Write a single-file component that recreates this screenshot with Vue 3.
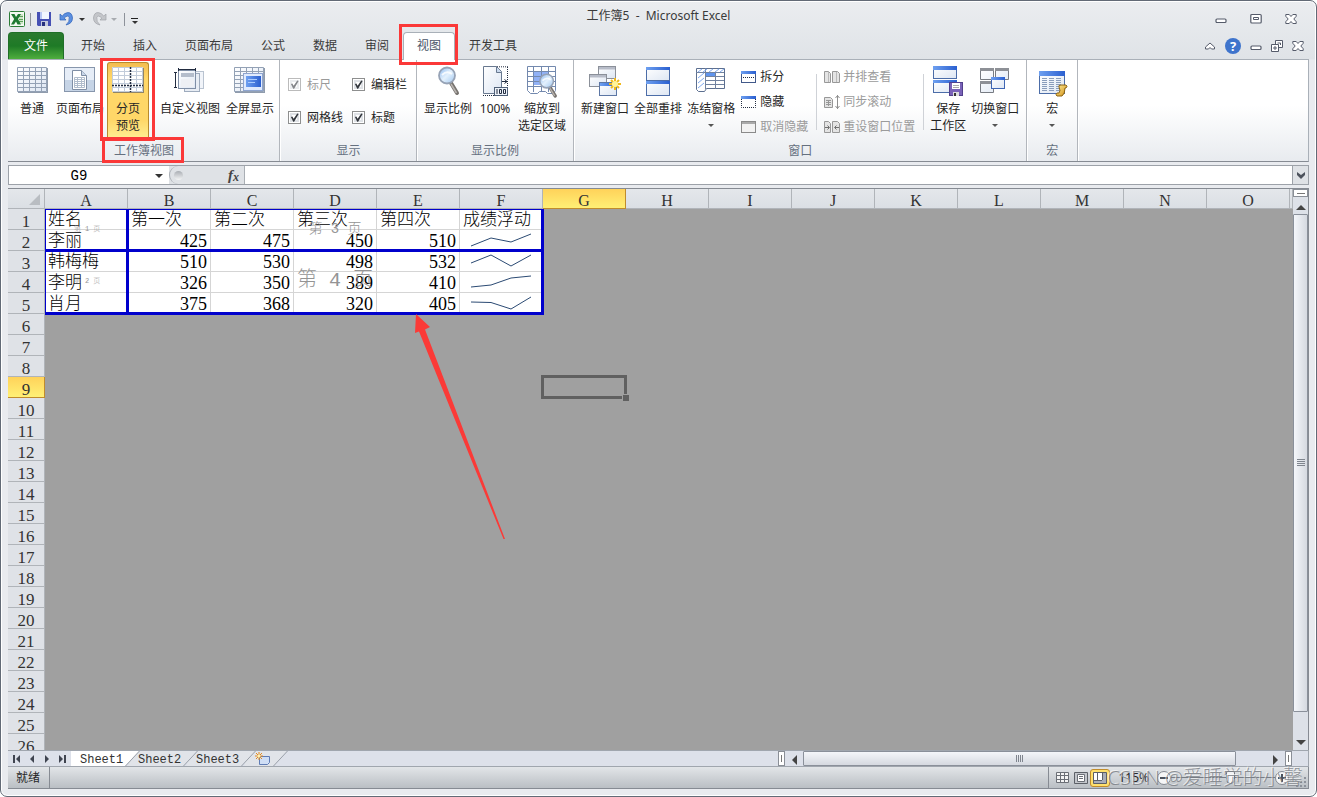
<script setup>
import { ref } from 'vue'

const tabs = ['开始', '插入', '页面布局', '公式', '数据', '审阅', '视图', '开发工具']
const activeTab = ref('视图')

const columns = 'ABCDEFGHIJKLMNO'.split('')
const rowCount = 26
const selected = { col: 'G', row: 9 }

const data = [
  ['姓名', '第一次', '第二次', '第三次', '第四次', '成绩浮动'],
  ['李丽', 425, 475, 450, 510],
  ['韩梅梅', 510, 530, 498, 532],
  ['李明', 326, 350, 389, 410],
  ['肖月', 375, 368, 320, 405]
]
const sparks = {
  2: '11,16 31,8 51,12 71,4',
  3: '11,12 31,4 51,15 71,4',
  4: '11,15 31,13 51,6 71,4',
  5: '11,9 31,9.5 51,16 71,4'
}
const isText = (v) => typeof v === 'string'
const nameBox = ref('G9')
const formula = ref('')
const zoomLevel = ref(58)
const sheets = ['Sheet1', 'Sheet2', 'Sheet3']
const activeSheet = ref('Sheet1')

const viewButtons = [
  { icon: 'normal', lines: ['普通'] },
  { icon: 'layout', lines: ['页面布局'] },
  { icon: 'breaks', lines: ['分页', '预览'], on: true },
  { icon: 'custom', lines: ['自定义视图'] },
  { icon: 'full', lines: ['全屏显示'] }
]
const checks = ref([
  { id: 'ruler', label: '标尺', on: true, off: true },
  { id: 'fbar', label: '编辑栏', on: true },
  { id: 'lines', label: '网格线', on: true },
  { id: 'heads', label: '标题', on: true }
])
const zoomButtons = [
  { icon: 'lens', lines: ['显示比例'] },
  { icon: 'hundred', lines: ['100%'] },
  { icon: 'zoomsel', lines: ['缩放到', '选定区域'] }
]
const windowButtons = [
  { icon: 'newwin', lines: ['新建窗口'] },
  { icon: 'arrange', lines: ['全部重排'] },
  { icon: 'freeze', lines: ['冻结窗格'], more: true }
]
const smallA = [
  { icon: 'split', label: '拆分' },
  { icon: 'hide', label: '隐藏' },
  { icon: 'unhide', label: '取消隐藏', off: true }
]
const smallB = [
  { icon: 'side', label: '并排查看', off: true },
  { icon: 'sync', label: '同步滚动', off: true },
  { icon: 'reset', label: '重设窗口位置', off: true }
]
const spaceButtons = [
  { icon: 'savews', lines: ['保存', '工作区'] },
  { icon: 'switch', lines: ['切换窗口'], more: true }
]
</script>

<template>
  <svg class="sprite" aria-hidden="true">
    <defs>
      <linearGradient id="gCell" x1="0" y1="0" x2="1" y2="1"><stop offset="0" stop-color="#fff" /><stop offset="1" stop-color="#dde6f3" /></linearGradient>
      <linearGradient id="gBlue" x1="0" y1="0" x2="1" y2="0"><stop offset="0" stop-color="#6ea0f0" /><stop offset="1" stop-color="#2a5fd0" /></linearGradient>
      <linearGradient id="gLens" x1="0" y1="0" x2="1" y2="1"><stop offset="0" stop-color="#8db9ee" /><stop offset=".5" stop-color="#e4f1fd" /><stop offset="1" stop-color="#9cc4ee" /></linearGradient>
      <linearGradient id="gGold" x1="0" y1="0" x2="1" y2="1"><stop offset="0" stop-color="#fff0a0" /><stop offset="1" stop-color="#d08c10" /></linearGradient>
      <g id="win">
        <rect x=".5" y=".5" width="17" height="12" fill="url(#gCell)" stroke="#8b9099" />
        <rect x="1" y="1" width="16" height="2.5" fill="#b7bcc8" />
      </g>
      <g id="lensShape">
        <path d="M13 17l6 10" stroke="#77736f" stroke-width="4" stroke-linecap="round" />
        <path d="M13 18l5.500 9" stroke="#b9b4b0" stroke-width="1.500" />
        <circle cx="9" cy="9.500" r="8" fill="url(#gLens)" stroke="#97a3b6" stroke-width="1.800" />
        <path d="M4 9q5-5 10-1" stroke="#fff" stroke-width="2" fill="none" opacity=".8" />
      </g>
      <symbol id="i-normal" viewBox="0 0 32 32">
        <path d="M2 2h30v25H2z" fill="#8f9bac" /><path d="M1 1h30v25H1z" fill="url(#gCell)" />
        <path d="M1.500 1.500h29v24h-29zM1 5.500h29M1 9.500h29M1 13.500h29M1 17.500h29M1 21.500h29M7.500 1v25M13.500 1v25M19.500 1v25M25.500 1v25" stroke="#93a1b5" fill="none" />
      </symbol>
      <symbol id="i-layout" viewBox="0 0 32 32">
        <rect x=".5" y="1.500" width="30" height="24" fill="#e6edf7" stroke="#8796ac" />
        <path d="M1 14h29v11H1z" fill="#c6d4e6" />
        <path d="M8.500 4.500h9l5 5v14h-14z" fill="#fff" stroke="#7f8ea5" /><path d="M17.500 4.500v5h5" fill="#c9d7ea" stroke="#7f8ea5" />
        <path d="M10.500 11.500h10v10h-10zM10 13.500h11M10 15.500h11M10 17.500h11M10 19.500h11M13.500 11v11M17.500 11v11" fill="none" stroke="#b0bccc" />
      </symbol>
      <symbol id="i-breaks" viewBox="0 0 32 32">
        <path d="M1 2h31v25H1z" fill="#8f8468" /><path d="M0 1h31v25H0z" fill="#fff" />
        <path d="M.5 1.500h30v24H.5zM0 5.500h30M0 9.500h30M0 13.500h30M0 17.500h30M0 21.500h30M6.500 1v25M12.500 1v25M24.500 1v25" stroke="#c2ccda" fill="none" />
        <path d="M18.500 1v25M0 19.500h31" stroke="#222c40" stroke-width="1.500" stroke-dasharray="2 1" />
      </symbol>
      <symbol id="i-custom" viewBox="0 0 32 32">
        <rect x="17.500" y="5.500" width="12" height="17" fill="#f1f4f9" stroke="#b9c3d0" /><rect x="10.500" y="7.500" width="15" height="18" fill="#e8edf4" stroke="#9eabbd" />
        <rect x="4.500" y="4.500" width="17" height="18" fill="url(#gCell)" stroke="#7f8ea5" /><path d="M7 7h13v4H7z" fill="#b4bdcb" /><path d="M7 13h13v8H7z" fill="#eef0f4" />
        <path d="M4 3.500h18M4.500 2v3M21.500 2v3M1.500 6v16M0 6.500h3M0 21.500h3" stroke="#222c40" fill="none" />
      </symbol>
      <symbol id="i-full" viewBox="0 0 32 32">
        <path d="M1 2h30v25H1z" fill="#8f9bac" /><path d="M0 1h30v25H0z" fill="url(#gCell)" />
        <path d="M.5 1.500h29v24H.5zM0 5.500h29M0 9.500h29M0 13.500h29M0 17.500h29M0 21.500h29M6.500 1v25M12.500 1v25M18.500 1v25M24.500 1v25" stroke="#93a1b5" fill="none" />
        <rect x="9.500" y="7.500" width="19" height="17" fill="#dfeafd" stroke="#8fa5cf" /><rect x="12" y="10" width="15" height="11" fill="url(#gBlue)" /><path d="M14 13.500h9M14 16.500h7" stroke="#a9cbff" />
      </symbol>
      <symbol id="i-lens" viewBox="0 0 32 32"><g transform="translate(6 0)"><use href="#lensShape" /></g></symbol>
      <symbol id="i-hundred" viewBox="0 0 32 32">
        <path d="M4.500.5h13l5 5v22h-18z" fill="url(#gCell)" stroke="#68788f" /><path d="M17.500.5v6h5" fill="#c9d9ee" stroke="#68788f" />
        <path d="M18 .8h11M28.500 1v28M4 29.500h12" stroke="#222c40" stroke-dasharray="1 1" /><path d="M23 15.500h5M25.500 13.500l2.500 2-2.500 2" fill="none" stroke="#222c40" />
        <rect x="15.500" y="21.500" width="13" height="8" fill="#eef3fa" stroke="#4f6078" /><path d="M18 23v5M20.500 23.500h2v4h-2zM24.500 23.500h2v4h-2z" fill="none" stroke="#222c40" />
      </symbol>
      <symbol id="i-zoomsel" viewBox="0 0 32 32">
        <path d="M1 0h28v24H1z" fill="#fff" /><path d="M8 5h15v14H8z" fill="#91b1f6" />
        <path d="M1.500.5h28v24l-2 3h-6l-2-2h-6l-2 2h-7l-3-3zM1 5.500h28M1 10.500h28M1 15.500h28M1 20.500h28M7.500 0v26M15.500 0v26M22.500 0v26" stroke="#7389ae" fill="none" />
        <g transform="translate(13 7) scale(.85)"><use href="#lensShape" /></g>
      </symbol>
      <symbol id="i-newwin" viewBox="0 0 32 32">
        <g transform="translate(9 0)"><use href="#win" /></g><g transform="translate(0 8)"><use href="#win" /></g>
        <rect x="10.500" y="16.500" width="17" height="13" fill="url(#gCell)" stroke="#5c76a4" /><path d="M11 17h16v3H11z" fill="url(#gBlue)" />
        <path d="M26 12v12M20 18h12M22 14l8 8M30 14l-8 8" stroke="#f1b91b" stroke-width="2" /><circle cx="26" cy="18" r="3" fill="#fff49b" />
      </symbol>
      <symbol id="i-arrange" viewBox="0 0 32 32">
        <rect x="4.500" y="1.500" width="23" height="13" fill="url(#gCell)" stroke="#4c6da8" /><path d="M4 1h24v3H4z" fill="url(#gBlue)" />
        <rect x="4.500" y="15.500" width="23" height="14" fill="url(#gCell)" stroke="#4c6da8" /><path d="M4 15h24v3H4z" fill="url(#gBlue)" />
      </symbol>
      <symbol id="i-freeze" viewBox="0 0 32 32">
        <path d="M1.500 2.500h28v20h-18l-2 3h-6l-2-2z" fill="#fff" stroke="#5c6f90" />
        <path d="M10.500 2v21M1 6.500h28M10 10.500h19M10 14.500h19M10 18.500h19M20.500 6v17" stroke="#71829f" fill="none" />
        <path d="M11 7h9v3h-9z" fill="#5f94ee" />
        <path d="M3 6l4-3M8 6l4-3M14 6l4-3M20 6l4-3M25 6l4-3M3 12l6-5M3 17l6-5M3 22l6-5" stroke="#7faaf0" />
      </symbol>
      <symbol id="i-savews" viewBox="0 0 32 32">
        <rect x="1.500" y=".5" width="23" height="12" fill="url(#gCell)" stroke="#4c6da8" /><path d="M1 0h24v4H1z" fill="url(#gBlue)" />
        <rect x="1.500" y="14.500" width="23" height="12" fill="url(#gCell)" stroke="#4c6da8" /><path d="M1 14h24v3H1z" fill="url(#gBlue)" />
        <rect x="17.500" y="16.500" width="13" height="13" fill="#7a62b8" stroke="#51408c" /><path d="M20 17h8v6h-8z" fill="#fff" /><path d="M21 19.500h6M21 21.500h6" stroke="#aaa" /><path d="M21 26h6v4h-6z" fill="#ddd" /><path d="M22 27h2v3h-2z" fill="#333" />
      </symbol>
      <symbol id="i-switch" viewBox="0 0 32 32">
        <path d="M1.500 2.500h13v11h-13zM16.500 2.500h13v11h-13zM1.500 15.500h13v11h-13z" fill="url(#gCell)" stroke="#777b82" /><path d="M1 2h14v3H1zM16 2h14v3H16zM1 15h14v3H1z" fill="#8d9096" />
        <rect x="12.500" y="11.500" width="13" height="11" fill="url(#gCell)" stroke="#3f66b4" /><path d="M12 11h14v3H12z" fill="url(#gBlue)" />
      </symbol>
      <symbol id="i-macro" viewBox="0 0 32 32">
        <rect x="3.500" y="5.500" width="25" height="22" fill="url(#gCell)" stroke="#4c6da8" /><path d="M3 5h26v5H3z" fill="url(#gBlue)" />
        <path d="M6 12.500h20M6 14.500h20M6 16.500h20M6 18.500h20M6 20.500h20M6 22.500h20M6 24.500h20" stroke="#8a9dbb" stroke-dasharray="5 2" />
        <path d="M23 21q-1-2 2-2h5q2 1 0 3h-1q0 6-3 8h-5q-2-1 0-3h2q2-2 0-6z" fill="url(#gGold)" stroke="#8d6514" />
      </symbol>
      <symbol id="i-split" viewBox="0 0 16 16"><rect x=".5" y="2.500" width="14" height="11" fill="#fff" stroke="#42598a" /><path d="M0 2h15v3H0z" fill="url(#gBlue)" /><path d="M2 8.500h12" stroke="#222c40" stroke-dasharray="1 1" /></symbol>
      <symbol id="i-hide" viewBox="0 0 16 16"><path d="M0 2h15v3H0z" fill="url(#gBlue)" /><path d="M.5 5v8.500h14V5" fill="#fff" stroke="#222c40" stroke-dasharray="1 1" /></symbol>
      <symbol id="i-unhide" viewBox="0 0 16 16"><rect x=".5" y="2.500" width="14" height="11" fill="#f2f2f2" stroke="#8a8a8a" /><path d="M1 3h13v2H1z" fill="#aaa" /></symbol>
      <symbol id="i-side" viewBox="0 0 16 16"><path d="M.5 2.500h4l2 2v9h-6zM8.500 2.500h5l2 2v9h-7z" fill="#e4e4e4" stroke="#989898" /><path d="M4.500 3v10M12.500 3v10" stroke="#b9b9b9" /></symbol>
      <symbol id="i-sync" viewBox="0 0 16 16"><path d="M.5 3.500h6l2 2v8h-8zM2 6.500h5M2 8.500h5M2 10.500h5M4.500 6v6" fill="#e4e4e4" stroke="#989898" /><path d="M13.500 1v14M11.500 4l2-2.500 2 2.500M11.500 12l2 2.500 2-2.500" fill="none" stroke="#8f8f8f" /></symbol>
      <symbol id="i-reset" viewBox="0 0 16 16"><path d="M.5 2.500h4l2 2v9h-6zM8.500 2.500h5l2 2v9h-7z" fill="#e4e4e4" stroke="#989898" /><path d="M1 8.500h4M3.500 6.500l2 2-2 2M15 8.500h-4M12.500 6.500l-2 2 2 2" fill="none" stroke="#6f6f6f" /></symbol>
      <symbol id="i-excel" viewBox="0 0 16 16"><rect x=".5" y=".5" width="15" height="15" rx="1" fill="#f4faf2" stroke="#2d7d38" /><path d="M10 3h4v10h-4z" fill="#cfe5c9" /><path d="M10 5.500h4M10 8.500h4M10 10.500h4" stroke="#5ea35b" /><path d="M2 3h3.500l1.500 3 2-3h3L9 8l3 5.500H8.500L7 10.500 5 13.500H2L5.200 8z" fill="#1f7a32" /></symbol>
      <symbol id="i-save" viewBox="0 0 16 16"><path d="M1 1h14v14H2l-1-1z" fill="#4650b4" /><path d="M4 1h9v7H4z" fill="#f2f7ff" /><path d="M4 1h2v7H4z" fill="#b9c8f4" /><path d="M5 10h7v5H5z" fill="#c3c9dc" /><path d="M6 11h3v4H6z" fill="#26307e" /></symbol>
      <symbol id="i-undo" viewBox="0 0 16 16"><path d="M1 3v6h6L5.200 7Q9 3.500 10.200 6.500q.8 4-3.200 7.500 6.500-1.500 6.500-7Q13 1.200 8.500 1.600 5.500 2 3.200 5z" fill="#5b8fe0" stroke="#2f62b8" stroke-width=".7" /></symbol>
      <symbol id="i-redo" viewBox="0 0 16 16"><path d="M15 3v6H9l1.800-2Q7 3.500 5.800 6.500 5 10.500 9 14 2.500 12.500 2.500 7 3 1.200 7.500 1.600q3 .4 5.300 3.400z" fill="#c4c6ca" stroke="#a1a4a9" stroke-width=".7" /></symbol>
      <symbol id="i-min" viewBox="0 0 12 12"><rect x="1" y="6" width="10" height="3.500" rx="1" fill="#fff" stroke="#555b6a" stroke-width="1.200" /></symbol>
      <symbol id="i-max" viewBox="0 0 12 12"><rect x=".8" y="1.500" width="10.400" height="8.500" rx="1" fill="#fff" stroke="#555b6a" stroke-width="1.200" /><path d="M3.500 4.500h5v2h-5z" fill="#fff" stroke="#555b6a" /></symbol>
      <symbol id="i-restore" viewBox="0 0 12 12"><path d="M4.500.5h7v7h-7z" fill="#fff" stroke="#555b6a" /><path d="M6.500 3h3v2" fill="none" stroke="#555b6a" /><path d="M.5 4.500h7v7h-7z" fill="#fff" stroke="#555b6a" /><path d="M3 7h2v2H3z" fill="none" stroke="#555b6a" /></symbol>
      <symbol id="i-close" viewBox="0 0 12 12"><path d="M.8 1.500h3.400L6 3.500l1.800-2h3.400v1.800L8.800 6l2.400 2.700v1.800H7.800L6 8.500l-1.800 2H.8V8.700L3.200 6 .8 3.300z" fill="#fff" stroke="#555b6a" /></symbol>
      <symbol id="i-up" viewBox="0 0 12 12"><path d="M1.500 7L6 3l4.500 4v2h-3L6 7.500 4.500 9h-3z" fill="#fff" stroke="#555b6a" /></symbol>
    </defs>
  </svg>

  <div class="window">
    <header class="titlebar">
      <div class="qat">
        <svg class="i16"><use href="#i-excel" /></svg>
        <span class="bar"></span>
        <button aria-label="保存"><svg class="i16"><use href="#i-save" /></svg></button>
        <button class="undo" aria-label="撤消"><svg class="i16"><use href="#i-undo" /></svg><i class="tri"></i></button>
        <button class="undo pale" aria-label="恢复"><svg class="i16"><use href="#i-redo" /></svg><i class="tri"></i></button>
        <span class="bar last"></span>
        <button class="customize" aria-label="自定义快速访问工具栏"><i class="tri"></i></button>
      </div>
      <h1>工作簿5&nbsp; -&nbsp; Microsoft Excel</h1>
      <div class="controls">
        <button aria-label="最小化"><svg class="i12"><use href="#i-min" /></svg></button>
        <button aria-label="最大化"><svg class="i12"><use href="#i-max" /></svg></button>
        <button aria-label="关闭"><svg class="i12"><use href="#i-close" /></svg></button>
      </div>
    </header>

    <nav class="tabs">
      <button class="file">文件</button>
      <button v-for="t in tabs" :key="t" class="tab" :class="{ active: t === activeTab }" @click="activeTab = t">
        {{ t }}<span v-if="t === '视图'" class="mark mark-tab"></span>
      </button>
      <div class="doc-controls">
        <button aria-label="折叠功能区"><svg class="i12"><use href="#i-up" /></svg></button>
        <button class="help" aria-label="帮助">?</button>
        <button aria-label="最小化窗口"><svg class="i12"><use href="#i-min" /></svg></button>
        <button aria-label="还原窗口"><svg class="i12"><use href="#i-restore" /></svg></button>
        <button aria-label="关闭窗口"><svg class="i12"><use href="#i-close" /></svg></button>
      </div>
    </nav>

    <section class="ribbon">
      <div class="group views">
        <div class="tools">
          <button v-for="b in viewButtons" :key="b.icon" class="big" :class="[b.icon, { on: b.on }]">
            <svg class="i32"><use :href="'#i-' + b.icon" /></svg>
            <span v-for="l in b.lines" :key="l">{{ l }}</span>
            <span v-if="b.on" class="mark mark-button"></span>
          </button>
        </div>
        <div class="caption"><span class="boxed">工作簿视图<span class="mark mark-caption"></span></span></div>
      </div>
      <div class="group show">
        <div class="tools checks">
          <label v-for="c in checks" :key="c.id" :for="c.id" :class="{ off: c.off }">
            <input :id="c.id" v-model="c.on" type="checkbox" :disabled="c.off" />{{ c.label }}
          </label>
        </div>
        <div class="caption">显示</div>
      </div>
      <div class="group">
        <div class="tools">
          <button v-for="b in zoomButtons" :key="b.icon" class="big">
            <svg class="i32"><use :href="'#i-' + b.icon" /></svg>
            <span v-for="l in b.lines" :key="l">{{ l }}</span>
          </button>
        </div>
        <div class="caption">显示比例</div>
      </div>
      <div class="group">
        <div class="tools">
          <button v-for="b in windowButtons" :key="b.icon" class="big">
            <svg class="i32"><use :href="'#i-' + b.icon" /></svg>
            <span v-for="l in b.lines" :key="l">{{ l }}</span>
            <i v-if="b.more" class="tri"></i>
          </button>
          <div class="stack">
            <button v-for="b in smallA" :key="b.icon" :disabled="b.off"><svg class="i16"><use :href="'#i-' + b.icon" /></svg>{{ b.label }}</button>
          </div>
          <span class="divider"></span>
          <div class="stack">
            <button v-for="b in smallB" :key="b.icon" :disabled="b.off"><svg class="i16"><use :href="'#i-' + b.icon" /></svg>{{ b.label }}</button>
          </div>
          <span class="divider"></span>
          <button v-for="b in spaceButtons" :key="b.icon" class="big">
            <svg class="i32"><use :href="'#i-' + b.icon" /></svg>
            <span v-for="l in b.lines" :key="l">{{ l }}</span>
            <i v-if="b.more" class="tri"></i>
          </button>
        </div>
        <div class="caption">窗口</div>
      </div>
      <div class="group">
        <div class="tools">
          <button class="big"><svg class="i32"><use href="#i-macro" /></svg><span>宏</span><i class="tri"></i></button>
        </div>
        <div class="caption">宏</div>
      </div>
    </section>

    <div class="formula">
      <input v-model="nameBox" class="name" aria-label="名称框" />
      <button class="name-drop" aria-label="名称列表"><i class="tri"></i></button>
      <button class="fx" aria-label="插入函数"><span class="knob"></span><em>f<sub>x</sub></em></button>
      <input v-model="formula" class="entry" aria-label="编辑栏" />
      <button class="expand" aria-label="展开编辑栏"><svg width="10" height="8"><path d="M1 1l4 3 4-3v3L5 8 1 4z" fill="#4c525c" /></svg></button>
    </div>

    <main class="body">
      <div class="sheet">
        <table>
          <colgroup>
            <col class="c-head" /><col v-for="c in columns" :key="c" class="c-data" /><col />
          </colgroup>
          <thead>
            <tr>
              <th class="corner"><svg width="11" height="11"><path d="M11 0v11H0z" fill="#b9bdc2" /></svg></th>
              <th v-for="c in columns" :key="c" :class="{ sel: c === selected.col }">{{ c }}</th>
              <th></th>
            </tr>
          </thead>
          <tbody>
            <tr v-for="r in rowCount" :key="r">
              <th :class="{ sel: r === selected.row }">{{ r }}</th>
              <template v-if="r <= data.length">
                <td v-for="(v, i) in data[r - 1]" :key="i" :class="{ num: !isText(v) }">{{ v }}</td>
                <td v-if="r > 1" class="spark"><svg width="82" height="20"><polyline :points="sparks[r]" fill="none" stroke="#2b4a73" /></svg></td>
              </template>
            </tr>
          </tbody>
        </table>
        <div class="print-area">
          <span class="brk-v"></span><span class="brk-h"></span>
          <span class="page p1">第 1 页</span><span class="page p2">第 2 页</span>
          <span class="page p3">第 3 页</span><span class="page p4">第 4 页</span>
        </div>
        <div class="cursor"></div>
        <svg class="arrow" width="92" height="228" aria-hidden="true"><path d="M2 1L16 14l-5 2.500L91 226 89.500 226 5 18.500 1 20z" fill="#fb3a37" /></svg>
      </div>
      <div class="vscroll">
        <span class="grip-h"></span>
        <button aria-label="向上滚动"><svg width="10" height="6"><path d="M0 6l5-5 5 5z" fill="#444" /></svg></button>
        <div class="thumb"><i></i></div>
        <button class="down" aria-label="向下滚动"><svg width="10" height="6"><path d="M0 0h10L5 5z" fill="#444" /></svg></button>
      </div>
    </main>

    <div class="sheetbar">
      <div class="nav">
        <button aria-label="第一张"><svg width="8" height="8"><path d="M0 0h2v8H0zM7 0v8L3 4z" fill="#3f4450" /></svg></button>
        <button aria-label="上一张"><svg width="8" height="8"><path d="M6 0v8L2 4z" fill="#3f4450" /></svg></button>
        <button aria-label="下一张"><svg width="8" height="8"><path d="M2 0v8l4-4z" fill="#3f4450" /></svg></button>
        <button aria-label="最后一张"><svg width="8" height="8"><path d="M6 0h2v8H6zM1 0v8l4-4z" fill="#3f4450" /></svg></button>
      </div>
      <button v-for="s in sheets" :key="s" class="sheet-tab" :class="{ current: s === activeSheet }" @click="activeSheet = s">
        <svg width="70" height="16"><path d="M0 0H68L54 15H0" /><path d="M68.500 0L54.500 15" class="edge" /></svg><span>{{ s }}</span>
      </button>
      <button class="sheet-tab add" aria-label="插入工作表">
        <svg width="70" height="16"><path d="M0 0H42L28 15H0" /><path d="M42.500 0L28.500 15" class="edge" /></svg>
        <svg class="star" width="16" height="14"><path d="M4.500 4.500h10v6l-2 2h-8z" fill="#cfdef5" stroke="#5f7cb5" /><path d="M4 0v8M0 4h8M1 1l6 6M7 1L1 7" stroke="#e58a1c" /><circle cx="4" cy="4" r="1.500" fill="#fff3b0" /></svg>
      </button>
      <span class="fill"></span>
      <div class="hscroll">
        <span class="grip-v"></span>
        <button aria-label="向左滚动"><svg width="6" height="10"><path d="M6 0v10L1 5z" fill="#444" /></svg></button>
        <div class="track"><div class="thumb"><i></i></div></div>
        <button aria-label="向右滚动"><svg width="6" height="10"><path d="M0 0v10l5-5z" fill="#444" /></svg></button>
        <span class="grip-v"></span>
      </div>
    </div>

    <footer class="status">
      <span class="ready">就绪</span>
      <span class="fill"></span>
      <div class="view-icons">
        <button aria-label="普通"><svg width="14" height="12"><path d="M.5.5h12v10H.5zM0 3.500h13M0 7.500h13M4.500 0v11M8.500 0v11" fill="#f4f4f4" stroke="#6b6f76" /></svg></button>
        <button aria-label="页面布局"><svg width="14" height="12"><path d="M.5.500h13v11H.5z" fill="#c3c6cb" stroke="#5c6067" /><path d="M3.500 2.500h7v7h-7zM5 4.500h4M5 6.500h4" fill="#fff" stroke="#6b6f76" /></svg></button>
        <button class="lit" aria-label="分页预览"><svg width="14" height="12"><path d="M.5.500h13v11H.5z" fill="#a9adb8" stroke="#5c6067" /><path d="M1 1h8v7H1z" fill="#fff" /><path d="M4.500 0v8M9.500 0v8M0 8.500h9" stroke="#5c6067" /></svg></button>
      </div>
      <span class="percent">115%</span>
      <button class="round" aria-label="缩小"><svg width="8" height="8"><path d="M0 4h8" stroke="#4c525c" stroke-width="2" /></svg></button>
      <input v-model="zoomLevel" type="range" aria-label="显示比例" />
      <button class="round" aria-label="放大"><svg width="8" height="8"><path d="M0 4h8M4 0v8" stroke="#4c525c" stroke-width="2" /></svg></button>
      <svg class="resize" width="12" height="12" aria-hidden="true"><path d="M9 1h2v2H9zM5 5h2v2H5zM9 5h2v2H9zM1 9h2v2H1zM5 9h2v2H5zM9 9h2v2H9z" fill="#8d939c" /></svg>
      <span class="credit">CSDN @爱睡觉的小馨</span>
    </footer>
  </div>
</template>

<style>
body { margin: 0; background: #fff; }
</style>

<style scoped>
* { box-sizing: border-box; }
button { border: 0; padding: 0; background: none; font: inherit; color: inherit; }
.sprite { position: absolute; width: 0; height: 0; }
.i12 { width: 12px; height: 12px; }
.i16 { width: 16px; height: 16px; flex: none; }
.i32 { width: 32px; height: 32px; flex: none; }
.fill { flex: 1; }
.tri { display: inline-block; width: 0; height: 0; border: 3px solid transparent; border-top-color: #333; border-bottom: 0; }
.mark { position: absolute; border: 3px solid #fb3838; pointer-events: none; z-index: 5; }

.window {
  display: flex; flex-direction: column; height: 100vh; padding: 0 7px 7px; overflow: hidden;
  border: 1px solid #626a76; border-radius: 7px; box-shadow: inset 0 0 0 1px #fff;
  background: linear-gradient(#ebedf0, #dfe3e7 58px, #e9ebef 59px);
  font: 12px/16px "Noto Sans", "Noto Sans CJK SC", sans-serif; color: #262626;
}
.titlebar { display: grid; grid-template-columns: 1fr auto 1fr; height: 31px; flex: none; }
.titlebar h1 { margin: 0; padding-top: 7px; font: 12px/16px "Noto Sans", "Noto Sans CJK SC", sans-serif; color: #3a3a3a; }
.qat { display: flex; align-items: center; height: 16px; margin-top: 10px; gap: 7px; padding-left: 1px; }
.qat button { display: flex; align-items: center; }
.bar { width: 1px; height: 13px; background: #8d929a; margin: 0 -2px; }
.undo { gap: 4px; }
.pale { margin-left: -1px; }
.pale .tri { border-top-color: #a8abb0; }
.bar.last { margin: 0 -1px 0 0; }
.customize { flex-direction: column; justify-content: flex-end; height: 10px; }
.customize::before { content: ""; width: 7px; height: 1px; background: #222; margin-bottom: 2px; }
.controls { display: flex; justify-content: flex-end; gap: 23px; padding: 12px 12px 0 0; height: 24px; }
.controls button, .doc-controls button { display: flex; }

.tabs { display: flex; flex: none; height: 27px; }
.file { width: 56px; margin-right: 3px; border: 1px solid #1f6f28; border-bottom: 0; border-radius: 4px 4px 0 0; color: #fff; background: linear-gradient(#2b7a2f, #1e7a26 50%, #4fae3e); }
.tab { position: relative; padding: 0 13px; border: 1px solid transparent; border-bottom: 0; color: #3a3a3a; }
.tab.active { margin-bottom: -1px; padding-bottom: 1px; z-index: 2; background: #fff; border-color: #a9b0b8; border-radius: 4px 4px 0 0; color: #4a5568; }
.mark-tab { inset: -9px -4px -5px -5px; }
.doc-controls { display: flex; align-items: center; gap: 9px; margin-left: auto; padding-right: 5px; }
.doc-controls .help { display: block; width: 16px; height: 16px; border-radius: 50%; background: #3e74cc; color: #fff; font-weight: 700; font-size: 13px; line-height: 16px; text-align: center; }

.ribbon { display: flex; flex: none; height: 103px; border: 1px solid #a9b0b8; border-left: 0; border-bottom-color: #868b93; background: linear-gradient(#fff, #fff 45%, #e8ebef); }
.group { display: flex; flex-direction: column; padding: 2px 3px 0 4px; border-right: 1px solid #b2b6bc; box-shadow: 1px 0 #fff; }
.views { padding-left: 3px; padding-right: 2px; }
.tools { display: flex; height: 80px; }
.caption { color: #65707f; text-align: center; line-height: 18px; }
.boxed { position: relative; }
.mark-caption { inset: -5px -10px -4px -12px; }
.big { position: relative; display: flex; flex-direction: column; align-items: center; min-width: 42px; padding: 4px 3px 0; line-height: 17px; white-space: nowrap; }
.big + .big { margin-left: -1px; }
.views .big + .big { margin-left: 0; }
.group:nth-child(n + 3) { padding-right: 4px; }
.big svg { margin-bottom: 2px; }
.big .tri { margin-top: 7px; border-top-color: #555; }
.big.on { height: 78px; padding: 3px 8px 0; border: 1px solid #b98a2c; border-bottom-color: #ffe98a; border-radius: 3px 3px 0 0; background: linear-gradient(#f3bc50, #ffd768 20%, #ffd768 75%, #ffef94); }
.big.on .i32 { margin-left: -8px; margin-right: -8px; }
.views .big.custom { margin-left: 8px; }
.mark-button { inset: -5px -7px -2px -8px; }
.checks { display: grid; grid-template-columns: 64px 61px; grid-auto-rows: 33px; padding: 6px 0 0 4px; }
.checks label { display: flex; align-items: center; gap: 6px; }
.checks .off { color: #9a9a9a; }
.checks input { position: relative; appearance: none; width: 13px; height: 13px; margin: 0; border: 1px solid #8e8f8f; background: #fff; box-shadow: inset 0 0 0 1px #fff, inset 0 0 0 3px #dfe2e6; }
.checks input:checked::after { content: ""; position: absolute; inset: 1px; background: #33373d; clip-path: polygon(10% 45%, 25% 40%, 40% 65%, 80% 5%, 95% 10%, 45% 98%, 35% 98%); }
.checks input:disabled { opacity: .6; }
.stack { display: flex; flex-direction: column; padding: 2px 0 0 3px; }
.stack button { display: flex; align-items: center; gap: 3px; height: 25px; white-space: nowrap; }
.stack button:disabled { color: #9b9b9b; }
.divider { width: 1px; height: 56px; margin: 12px 4px 0 8px; background: #cfd2d7; }
.divider + .stack { padding-left: 3px; }
.divider + .big { margin-left: -1px; }

.formula { display: flex; flex: none; height: 20px; margin: 3px 0 4px; border: 1px solid #9da2a9; background: #dfe2e6; }
.formula input { border: 0; outline: 0; background: #fff; font: 14px "Liberation Mono", "Noto Sans CJK SC", monospace; min-width: 0; }
.name { width: 140px; text-align: center; padding: 2px 0 0; }
.name-drop { width: 20px; background: #fff; }
.name-drop .tri { border-width: 4px 4px 0; vertical-align: middle; }
.fx { display: flex; justify-content: space-between; align-items: center; width: 76px; padding: 0 5px 0 4px; border: 1px solid #a9aeb4; border-width: 0 1px; border-radius: 10px 0 0 10px; }
.knob { width: 9px; height: 9px; border-radius: 50%; background: linear-gradient(#a9adb3, #f4f5f6); }
.fx em { font: italic 700 15px/16px "Liberation Serif", serif; color: #444; }
.fx sub { font-size: 12px; line-height: 0; vertical-align: -1px; }
.entry { flex: 1; }
.expand { width: 16px; border-left: 1px solid #9da2a9; }

.body { display: flex; flex: 1; min-height: 0; margin-top: -1px; border: 1px solid #868b93; border-width: 1px 1px 0 0; }
.sheet { position: relative; flex: 1; min-width: 0; overflow: hidden; background: #a0a0a0; }
table { table-layout: fixed; width: 100%; border-spacing: 0; font: 17px/18px "Liberation Serif", "Noto Sans CJK SC", serif; color: #000; }
.c-head { width: 37px; }
.c-data { width: 83px; }
th { height: 21px; padding: 5px 0 0; border: 1px solid #b0b4b9; border-width: 0 1px 1px 0; background: #dfe2e7; font-weight: 400; line-height: 15px; color: #333; }
thead th { height: 20px; font-size: 16px; background: linear-gradient(#e4e7eb, #dbdfe4); line-height: 14px; }
th.sel { background: linear-gradient(#ffd25a, #fff075); border-color: #c08c2c; }
th.corner { text-align: right; padding: 1px 4px 0 0; }
.corner svg { display: block; margin-left: auto; }
td { height: 21px; padding: 2px 3px 0; border: 1px solid #d5d5d5; border-width: 0 1px 1px 0; background: #fff; line-height: 18px; white-space: nowrap; font-weight: 300; }
td.num { padding-top: 3px; text-align: right; font-size: 18px; line-height: 17px; }
td.spark { padding: 0; }
.spark svg { display: block; }
.print-area { position: absolute; left: 37px; top: 20px; width: 499px; height: 106px; border: solid #00c; border-width: 1px 3px 3px 1px; }
.brk-v { position: absolute; left: 80px; top: 0; bottom: 0; width: 3px; background: #00c; }
.brk-h { position: absolute; top: 39px; left: 0; right: 0; height: 3px; background: #00c; }
.page { position: absolute; transform: translate(-50%, -50%); white-space: nowrap; color: #949494; font-family: "Liberation Mono", "Noto Sans CJK SC", monospace; font-weight: 300; }
.p1 { left: 41px; top: 19px; font-size: 7px; }
.p2 { left: 41px; top: 71px; font-size: 7px; }
.p3 { left: 289px; top: 19px; font-size: 14px; }
.p4 { left: 289px; top: 71px; font-size: 20px; }
.cursor { position: absolute; left: 533px; top: 186px; width: 86px; height: 24px; border: 3px solid #606060; }
.cursor::after { content: ""; position: absolute; right: -5px; bottom: -5px; width: 6px; height: 6px; background: #606060; border: solid #a0a0a0; border-width: 1px 0 0 1px; }
.arrow { position: absolute; left: 406px; top: 124px; }
.vscroll { display: flex; flex-direction: column; align-items: stretch; width: 15px; background: #dde1e8; }
.vscroll button { height: 17px; }
.vscroll .down { margin-top: 21px; }
.grip-h { height: 8px; border: 1px solid #8a8f97; background: linear-gradient(#777, #777) center / 8px 1px no-repeat #fff; }
.thumb { display: flex; align-items: center; justify-content: center; flex: 1; border: 1px solid #8a909a; border-radius: 1px; background: linear-gradient(90deg, #f4f6fa, #d5d9e0); }
.vscroll .thumb i { width: 8px; height: 8px; background: repeating-linear-gradient(#7f858e 0 1px, transparent 1px 2px); }

.sheetbar { display: flex; flex: none; height: 17px; border: 1px solid #a0a6ae; border-left: 0; background: #dde1ea; }
.nav { display: flex; align-items: center; width: 63px; padding-left: 5px; gap: 7px; }
.nav button { display: flex; width: 8px; }
.sheet-tab { position: relative; width: 58px; z-index: 1; padding: 2px 0 0 9px; text-align: left; font: 12px/14px "Liberation Mono", monospace; color: #333; }
.sheet-tab:nth-of-type(2) { z-index: 3; }
.sheet-tab svg { position: absolute; left: 0; top: 0; fill: #e1e4e9; }
.sheet-tab.current { z-index: 4; }
.sheet-tab.current svg { fill: #fff; }
.sheet-tab .edge { stroke: #9aa0a9; fill: none; }
.sheet-tab span { position: relative; }
.sheet-tab.add { width: 50px; z-index: 0; }
.sheet-tab .star { left: 10px; top: 1px; }
.hscroll { display: flex; width: 514px; margin-right: 16px; }
.hscroll button { width: 18px; }
.hscroll svg { vertical-align: middle; }
.track { flex: 1; display: flex; padding-right: 31px; }
.hscroll .thumb { background: linear-gradient(#f4f6fa, #d5d9e0); }
.hscroll .thumb i { width: 8px; height: 7px; background: repeating-linear-gradient(90deg, #7f858e 0 1px, transparent 1px 2px); }
.grip-v { width: 7px; border: 1px solid #8a8f97; background: linear-gradient(#777, #777) center / 1px 7px no-repeat #fff; }

.status { position: relative; display: flex; align-items: center; flex: none; height: 22px; border: 1px solid #868b93; border-width: 0 1px 1px 0; background: linear-gradient(#e2e5e8, #babfc4); }
.ready { padding: 0 9px 0 8px; line-height: 21px; border-right: 1px solid #868b93; }
.view-icons { display: flex; align-items: center; padding-left: 5px; border-left: 1px solid #868b93; height: 21px; }
.view-icons button { display: flex; align-items: center; justify-content: center; width: 18px; height: 18px; }
.view-icons .lit { border: 1px solid #c08c2c; border-radius: 3px; background: #ffe06c; width: 20px; }
.percent { margin: 0 8px; }
.round { display: flex; align-items: center; justify-content: center; width: 14px; height: 14px; border: 1px solid #858a92; border-radius: 50%; background: #f5f6f7; }
.status input { appearance: none; width: 104px; height: 14px; margin: 0; background: linear-gradient(#777c84, #777c84) center / 100% 1px no-repeat; }
.status input::-webkit-slider-thumb { appearance: none; width: 9px; height: 13px; border: 1px solid #6d727a; border-radius: 2px 2px 5px 5px; background: #f2f3f5; }
.resize { margin: 8px 1px 0 6px; }
.credit { position: absolute; right: 5px; top: 0; font-size: 20px; line-height: 22px; color: rgba(125, 129, 135, .85); text-shadow: -1px -1px rgba(255, 255, 255, .6); white-space: nowrap; pointer-events: none; font-weight: 300; }
</style>
